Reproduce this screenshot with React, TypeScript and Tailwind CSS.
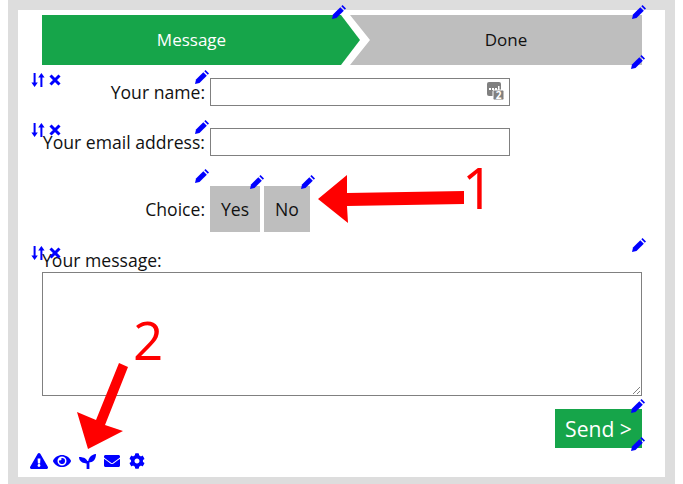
import React from "react";
import { FaExclamationTriangle, FaEye, FaEnvelope, FaCog } from "react-icons/fa";

function Pen({ className }: { className: string }) {
  return (
    <svg className={`absolute ${className}`} width="14" height="14" viewBox="0 0 14 14" fill="#0000ff">
      <polygon points="0,14 1,9.5 8.3,2.2 11.8,5.7 4.5,13" />
      <polygon points="9.3,1.2 10.5,0 14,3.5 12.8,4.7" />
    </svg>
  );
}

function Mover({ className }: { className: string }) {
  return (
    <div className={`absolute flex items-center gap-[4px] ${className}`}>
      <svg width="14" height="14" viewBox="0 0 14 14" fill="#0000ff">
        <polygon points="2.6,0 4.6,0 4.6,9.5 6.8,9.5 3.6,14 0.4,9.5 2.6,9.5" />
        <polygon points="9.4,14 11.4,14 11.4,4.5 13.6,4.5 10.4,0 7.2,4.5 9.4,4.5" />
      </svg>
      <svg width="12" height="12" viewBox="0 0 12 12" stroke="#0000ff" strokeWidth="3" fill="none">
        <path d="M1.5 1.5 L10.5 10.5 M10.5 1.5 L1.5 10.5" />
      </svg>
    </div>
  );
}

function KeyBadge() {
  return (
    <svg className="absolute top-[3px] right-[5px]" width="17" height="18" viewBox="0 0 17 18">
      <rect x="0" y="0" width="14" height="14" rx="2" fill="#808080" />
      <rect x="2" y="6" width="2" height="2" fill="#fff" />
      <rect x="5" y="6" width="2" height="2" fill="#fff" />
      <rect x="8" y="6" width="2" height="2" fill="#fff" />
      <rect x="11" y="4" width="1.5" height="4" fill="#fff" />
      <rect x="6" y="8" width="11" height="10" rx="1.5" fill="#808080" stroke="#fff" strokeWidth="1" />
      <text x="11.5" y="16.5" fontSize="10" fontWeight="700" textAnchor="middle" fill="#fff" fontFamily="'Open Sans', sans-serif">2</text>
    </svg>
  );
}

function Seedling() {
  return (
    <svg width="17" height="15" viewBox="0 0 17 15" fill="#0000ff">
      <path d="M0 3 C5 3 8.8 5 8.8 9.5 C4 9.5 0 7.5 0 3 Z" />
      <path d="M17 0 C17 5 14.5 8.5 9.2 8.5 C9.2 4 12 0.5 17 0 Z" />
      <rect x="7.6" y="7" width="2.8" height="8" />
    </svg>
  );
}

export default function App() {
  return (
    <div className="relative mx-2 h-[484px] border-x-[10px] border-t-[10px] border-b-[7px] border-[#dddddd] bg-white px-6 pt-[5px] font-['Open_Sans',sans-serif] text-[17.6px] text-[#111111]">
      <div className="relative flex h-[50px] w-[600px] text-[17px]">
        <div className="flex h-[50px] w-[318px] items-center bg-[#16a54a] text-[#ffffff] [clip-path:polygon(0_0,299px_0,318px_25px,299px_50px,0_50px)]">
          <span className="w-[299px] text-center">Message</span>
        </div>
        <div className="-ml-[10px] flex h-[50px] w-[292px] items-center justify-center bg-[#bebebe] pl-[20px] [clip-path:polygon(0_0,100%_0,100%_100%,0_100%,20px_25px)]">Done</div>
        <Pen className="top-[-10px] left-[290px]" />
        <Pen className="top-[-10px] -right-[4px]" />
        <Pen className="-right-[3px] -bottom-[4px]" />
      </div>

      <div className="relative mt-[13px] flex h-[28px] items-center">
        <label className="w-[168px] pr-[5px] text-right leading-[28px] whitespace-nowrap">Your name:</label>
        <div className="relative h-[28px] w-[300px] border border-[#808080]"><KeyBadge /></div>
        <Mover className="top-[-5px] left-[-11px]" />
        <Pen className="top-[-8px] left-[153px]" />
      </div>

      <div className="relative mt-[22px] flex h-[28px] items-center">
        <label className="flex w-[168px] justify-end pr-[5px] leading-[28px] whitespace-nowrap">Your email address:</label>
        <div className="h-[28px] w-[300px] border border-[#808080]" />
        <Mover className="top-[-5px] left-[-11px]" />
        <Pen className="top-[-8px] left-[153px]" />
      </div>

      <div className="relative mt-[30px] flex h-[46px] items-center">
        <label className="w-[168px] pr-[5px] text-right whitespace-nowrap">Choice:</label>
        <div className="flex gap-1">
          <div className="relative flex h-[46px] w-[50px] items-center justify-center bg-[#bebebe]">
            Yes
            <Pen className="top-[-11px] -right-[4px]" />
          </div>
          <div className="relative flex h-[46px] w-[46px] items-center justify-center bg-[#bebebe]">
            No
            <Pen className="top-[-11px] -right-[5px]" />
          </div>
        </div>
        <Pen className="top-[-17px] left-[153px]" />
      </div>

      <div className="relative mt-[17px] h-[23px] w-[600px] leading-[23px]">
        Your message:
        <Mover className="top-[-3px] left-[-11px]" />
        <Pen className="top-[-11px] -right-[4px]" />
      </div>
      <div className="relative h-[124px] w-[600px] border border-[#808080]">
        <svg className="absolute right-0 bottom-0" width="10" height="10" viewBox="0 0 10 10">
          <path d="M9 2 L2 9 M9 6 L6 9" stroke="#808080" strokeWidth="1" fill="none" />
        </svg>
      </div>

      <div className="mt-[13px] flex w-[600px] justify-end">
        <div className="relative flex h-[39px] w-[87px] items-center justify-center bg-[#16a54a] text-[21.12px] text-white">
          Send &gt;
          <Pen className="top-[-10px] -right-[3px]" />
          <Pen className="-right-[3px] -bottom-[3px]" />
        </div>
      </div>

      <div className="mt-[4px] -ml-[12px] flex items-center gap-[5px] text-[#0000ff]">
        <FaExclamationTriangle size={18} />
        <FaEye size={18} />
        <div className="ml-[3px]"><Seedling /></div>
        <FaEnvelope size={16} className="ml-[3px]" />
        <FaCog size={16} className="ml-[4px]" />
      </div>

      <svg className="absolute top-[-10px] left-[-18px]" width="683" height="484" viewBox="0 0 683 484">
        <polygon points="318,199 347,175 347,193 464,191 464,204 347,206 348,223" fill="#ff0000" />
        <polygon points="119,363 128,367 105,425 123,431 88,449 77,412 96,420" fill="#ff0000" />
      </svg>
      <div className="absolute top-[147px] left-[444px] text-[56px] leading-[60px] font-normal text-[#ff0000]">1</div>
      <div className="absolute top-[300px] left-[115px] text-[53px] leading-[60px] font-normal text-[#ff0000]">2</div>
    </div>
  );
}
